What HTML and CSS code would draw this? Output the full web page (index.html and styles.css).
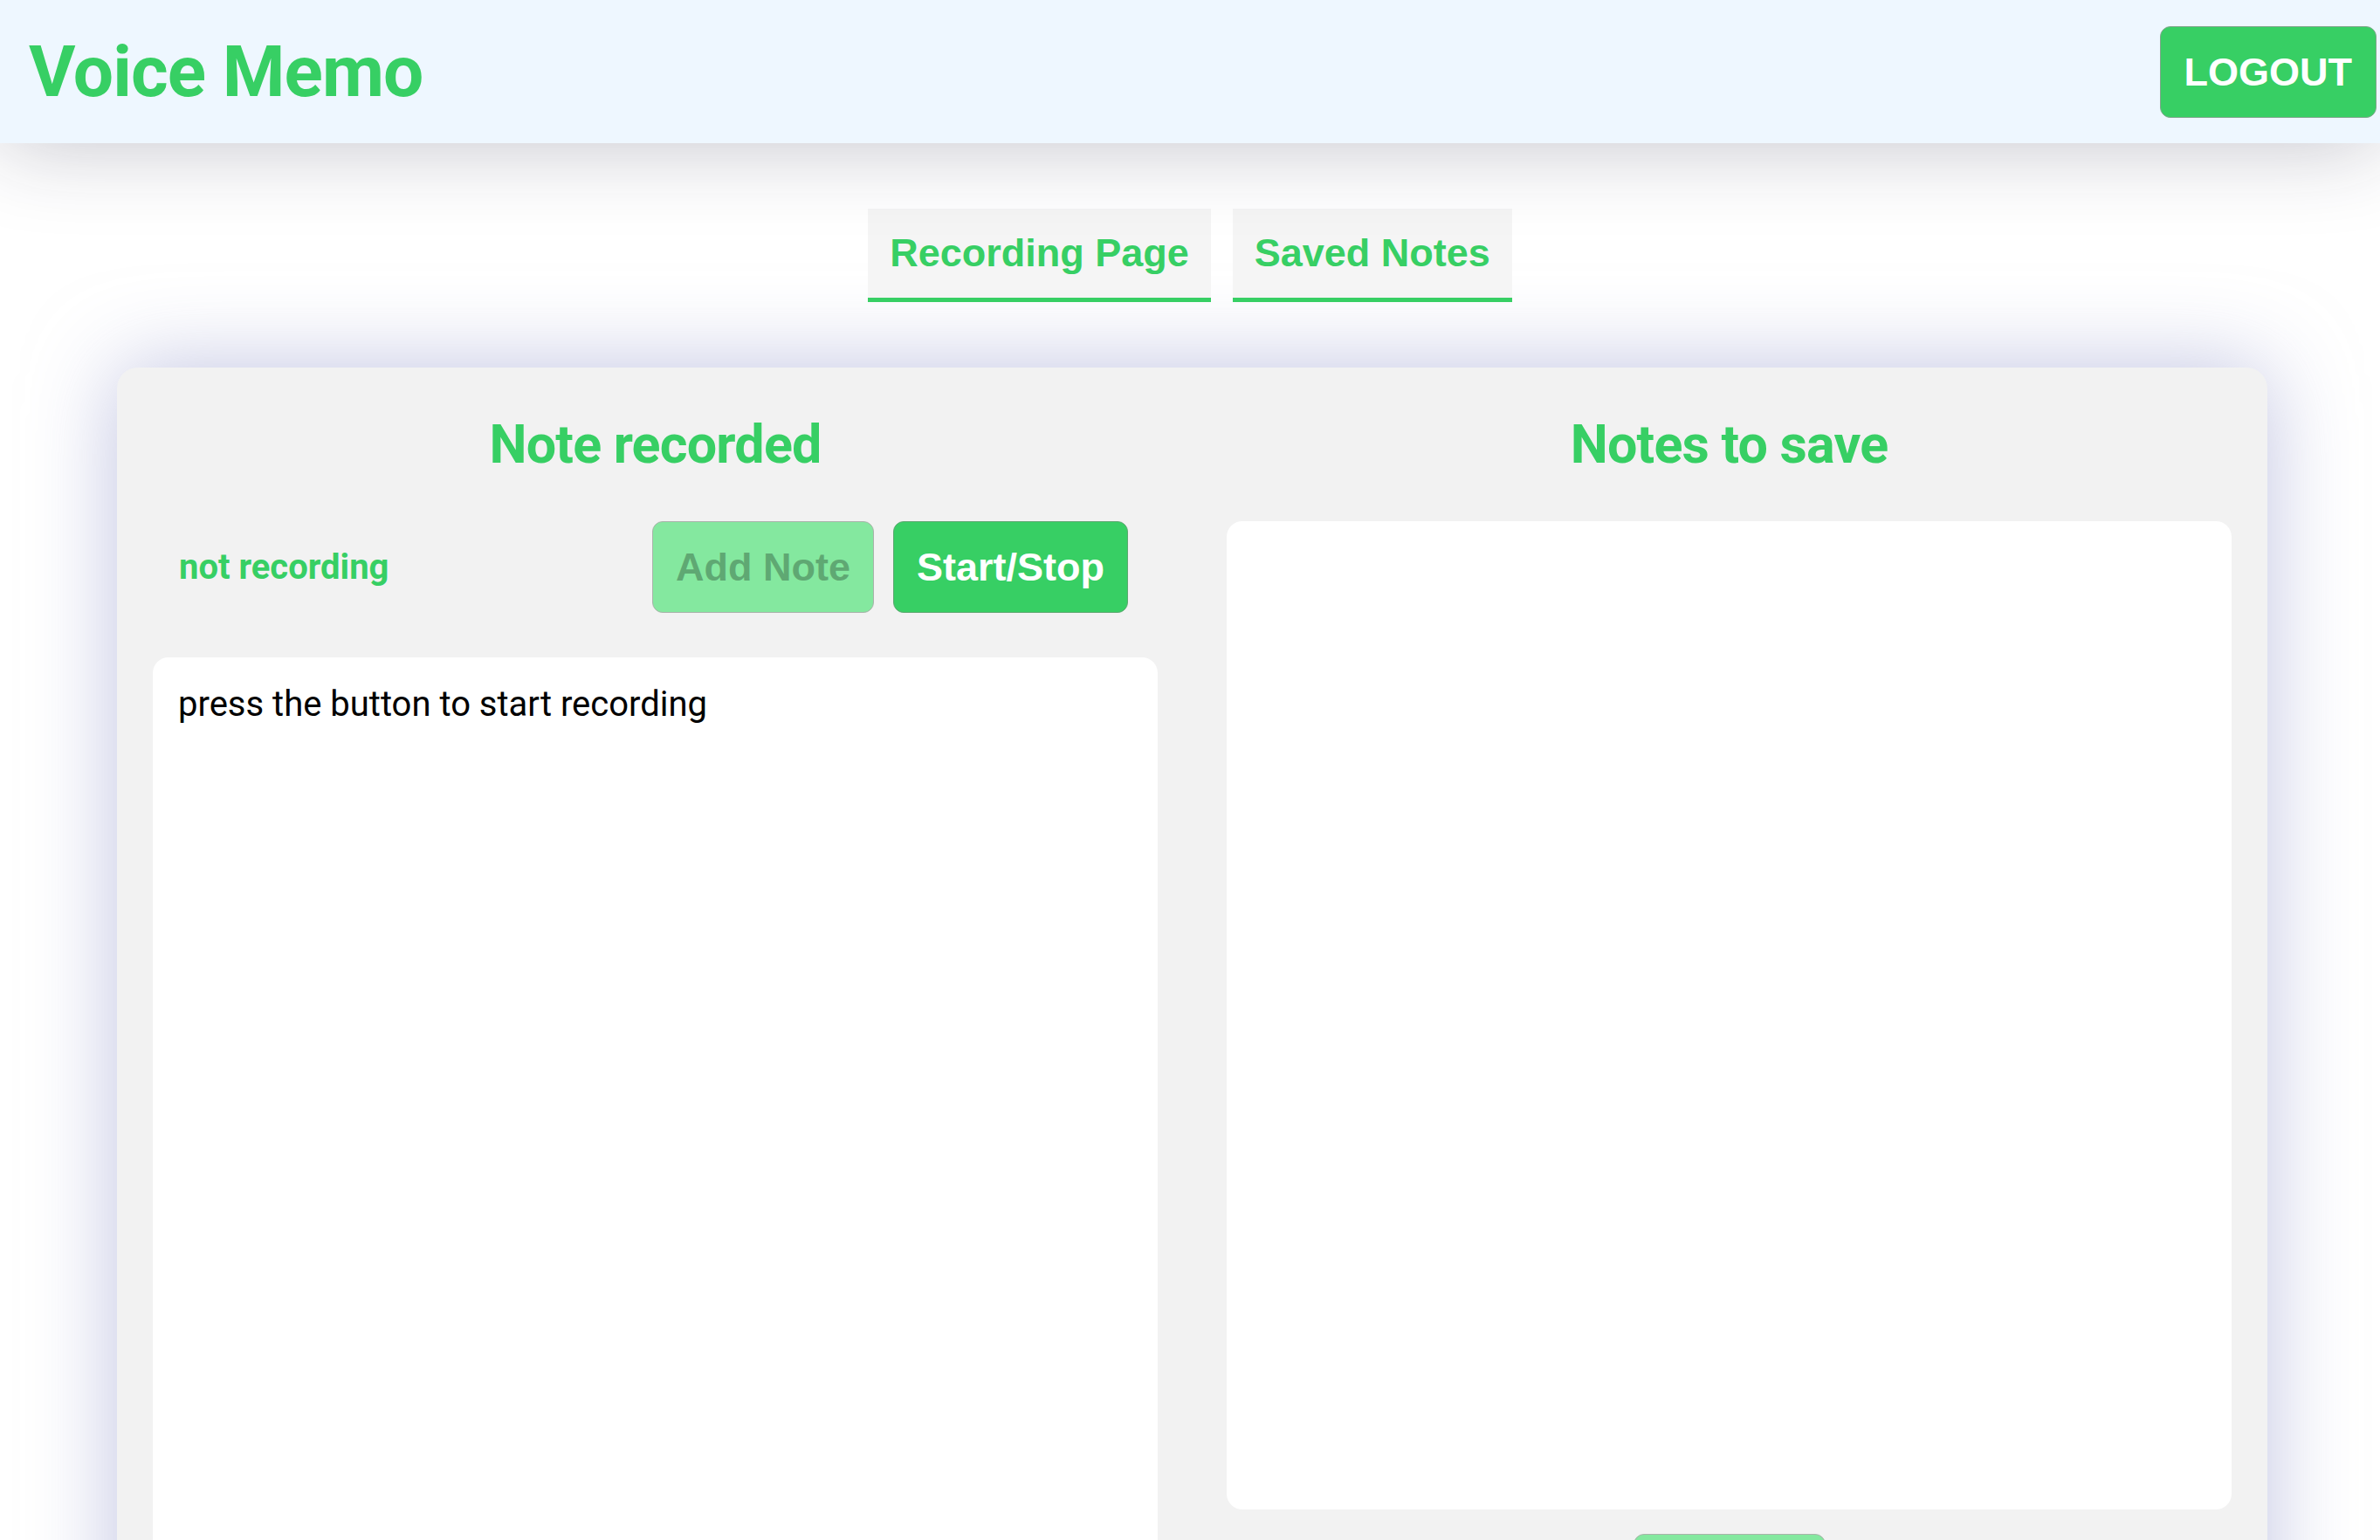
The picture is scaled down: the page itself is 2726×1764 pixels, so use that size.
FILE: index.html
```html
<!DOCTYPE html>
<html lang="en">
<head>
<meta charset="utf-8">
<title>Voice Memo</title>
<link rel="stylesheet" href="styles.css">
</head>
<body>
<header class="topbar">
  <h1 class="brand">Voice Memo</h1>
  <button class="btn btn-logout">LOGOUT</button>
</header>
<nav class="tabs">
  <a class="tab">Recording Page</a>
  <a class="tab">Saved Notes</a>
</nav>
<main class="card">
  <section class="col">
    <h2 class="col-title">Note recorded</h2>
    <div class="controls">
      <span class="status">not recording</span>
      <div class="actions">
        <button class="btn btn-disabled">Add Note</button>
        <button class="btn btn-primary">Start/Stop</button>
      </div>
    </div>
    <div class="note-box">press the button to start recording</div>
  </section>
  <section class="col">
    <h2 class="col-title">Notes to save</h2>
    <div class="save-box"></div>
    <div class="save-row"><button class="btn btn-disabled btn-save">Save</button></div>
  </section>
</main>
</body>
</html>
```

FILE: styles.css
```css
html, body {
  margin: 0;
  padding: 0;
  background: #ffffff;
}
body {
  font-family: Roboto, "Liberation Sans", sans-serif;
  overflow: hidden;
}
.topbar {
  position: relative;
  z-index: 2;
  height: 164px;
  box-sizing: border-box;
  background: #eef7ff;
  display: flex;
  align-items: center;
  justify-content: space-between;
  padding: 0 4px 0 33px;
  box-shadow: 0 0 100px rgba(30, 30, 60, 0.27);
}
.brand {
  margin: 0;
  font-family: Roboto, sans-serif;
  font-weight: 700;
  font-size: 82px;
  color: #37cf64;
  letter-spacing: -0.9px;
}
.btn {
  font-family: "Liberation Sans", Arial, sans-serif;
  font-weight: 700;
  font-size: 45px;
  line-height: 53px;
  padding: 25px 26px;
  border-radius: 12px;
  border: 1.5px solid #7fa58b;
  cursor: pointer;
}
.btn-logout {
  background: #37cf64;
  color: #ffffff;
  padding: 25px 27px;
}
.btn-primary {
  background: #37cf64;
  color: #ffffff;
  border-color: #5da771;
}
.btn-disabled {
  background: #84e89f;
  color: #5fa873;
  border-color: #a9b3aa;
}
.tabs {
  margin-top: 75px;
  display: flex;
  justify-content: center;
  gap: 25px;
}
.tab {
  background: #f5f5f5;
  padding: 25px 25px 25px;
  border-bottom: 5px solid #37cf64;
  font-family: "Liberation Sans", Arial, sans-serif;
  font-weight: 700;
  font-size: 45px;
  line-height: 52px;
  color: #37cf64;
}
.card {
  width: 2463px;
  margin: 75px 0 0 134px;
  box-sizing: border-box;
  background: #f2f2f2;
  border-radius: 24px;
  padding: 53px 41px 60px;
  display: grid;
  grid-template-columns: 1fr 1fr;
  column-gap: 79px;
  box-shadow: 0 0 100px rgba(150, 155, 205, 0.6);
}
.col {
  display: flex;
  flex-direction: column;
}
.col-title {
  margin: 0 0 51px;
  text-align: center;
  font-family: Roboto, sans-serif;
  font-weight: 700;
  font-size: 61px;
  line-height: 71.5px;
  color: #37cf64;
  letter-spacing: -0.8px;
}
.controls {
  display: flex;
  align-items: center;
  justify-content: space-between;
  padding: 0 34px 0 30px;
  height: 106px;
}
.status {
  font-family: Roboto, sans-serif;
  font-weight: 700;
  font-size: 40px;
  color: #37cf64;
  letter-spacing: 0;
}
.actions {
  display: flex;
  gap: 22px;
}
.note-box {
  margin-top: 50px;
  background: #ffffff;
  border-radius: 18px;
  height: 1200px;
  box-sizing: border-box;
  padding: 30px 29px;
  font-family: Roboto, sans-serif;
  font-size: 40px;
  line-height: 47px;
  color: #000000;
}
.save-box {
  background: #ffffff;
  border-radius: 18px;
  height: 1132px;
}
.save-row {
  display: flex;
  justify-content: center;
  margin-top: 28px;
}
.btn-save {
  width: 220px;
}
```
